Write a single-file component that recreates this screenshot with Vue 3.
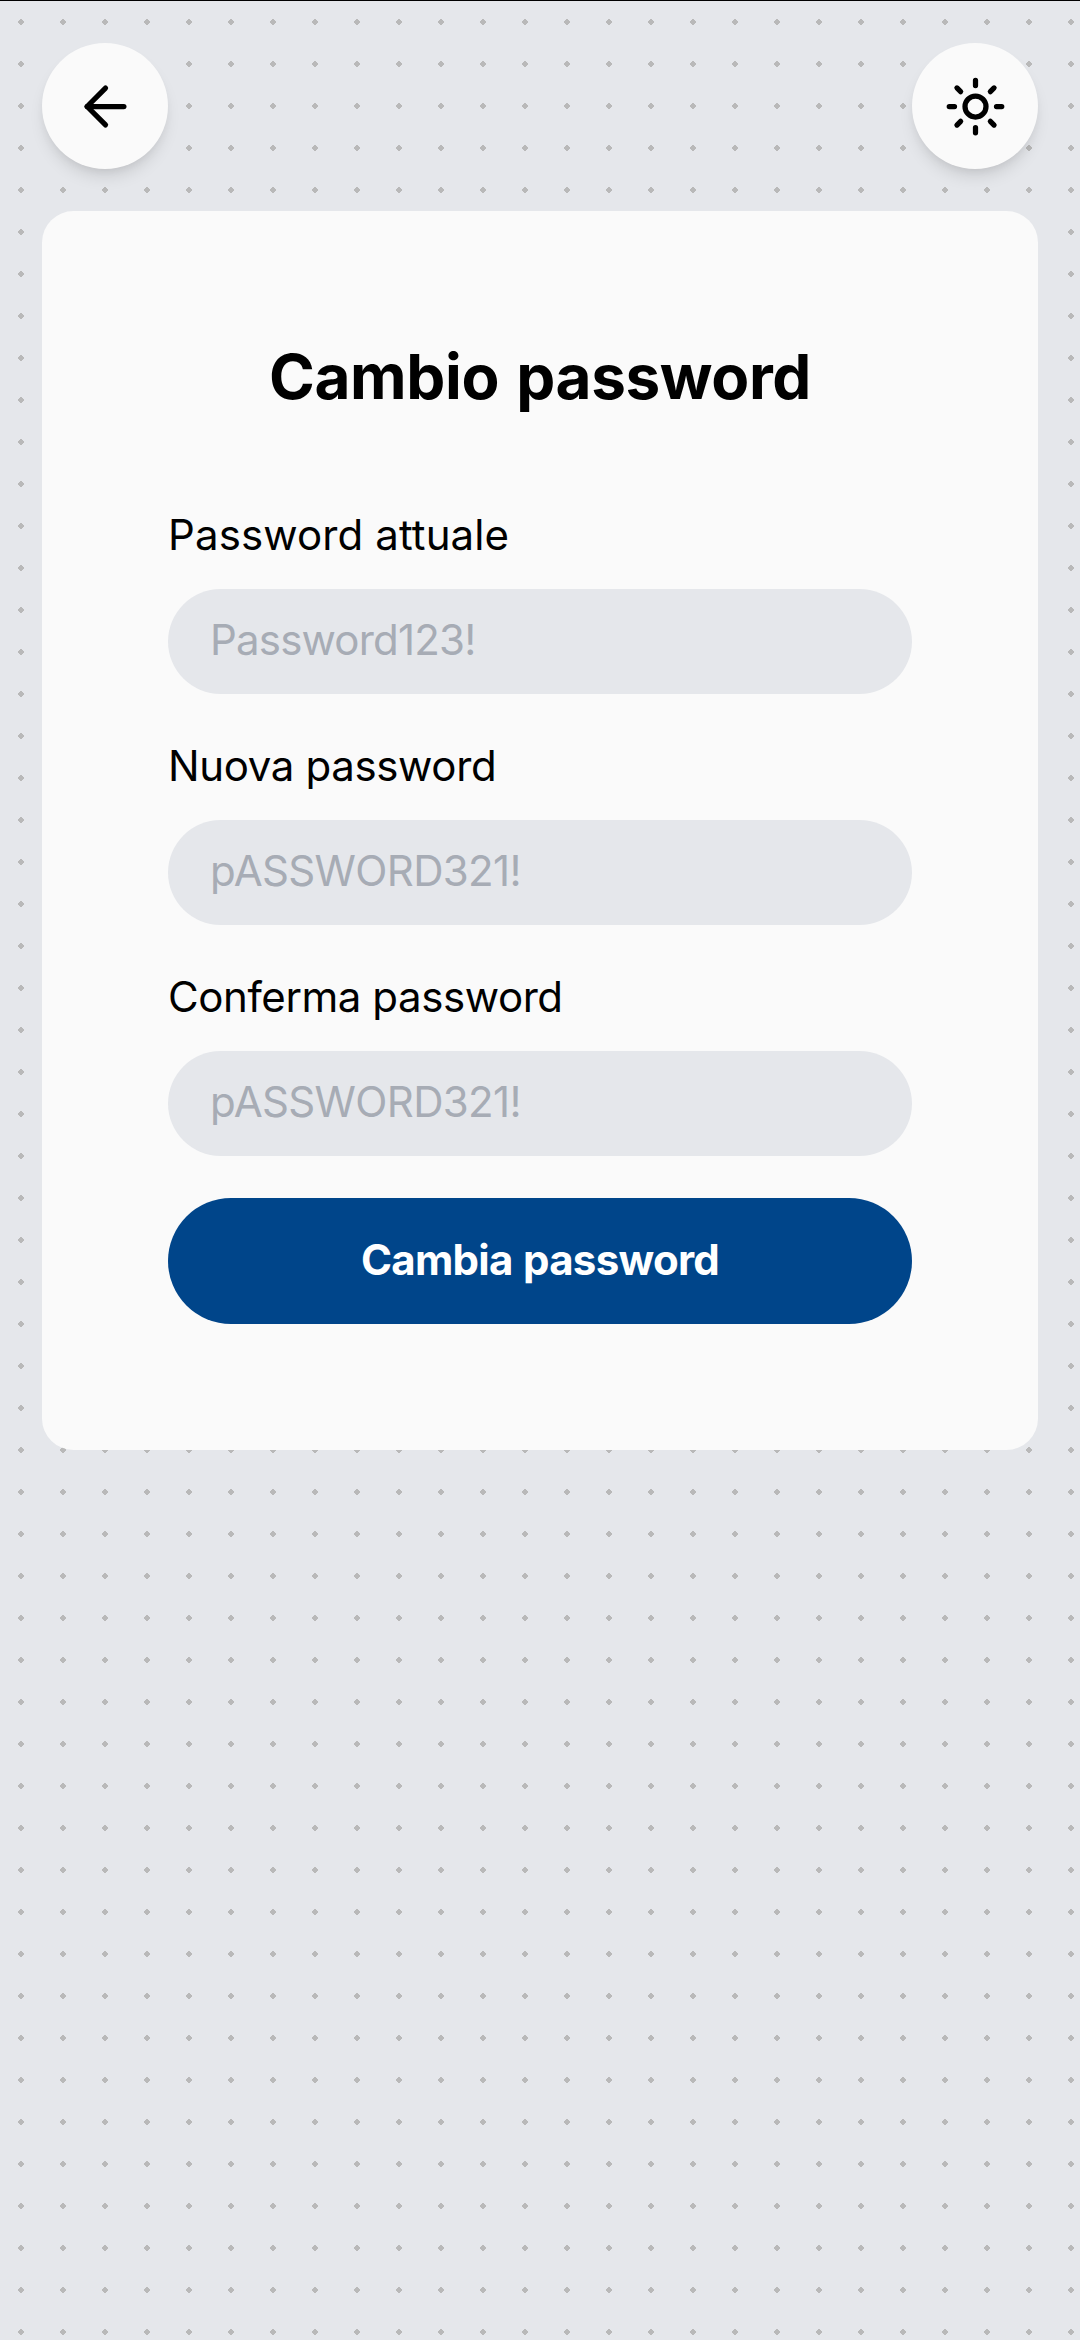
<script setup>
const fields = [
  { id: 'current', label: 'Password attuale', placeholder: 'Password123!' },
  { id: 'next', label: 'Nuova password', placeholder: 'pASSWORD321!' },
  { id: 'confirm', label: 'Conferma password', placeholder: 'pASSWORD321!' },
]
</script>

<template>
  <div class="page">
    <header class="toolbar">
      <button class="round" type="button" aria-label="Indietro">
        <svg viewBox="0 0 24 24"><path d="m12 19-7-7 7-7" /><path d="M19 12H5" /></svg>
      </button>
      <button class="round" type="button" aria-label="Tema">
        <svg viewBox="0 0 24 24">
          <circle cx="12" cy="12" r="4" />
          <path d="M12 2v2M12 20v2m-7.07-17.07 1.41 1.41m11.32 11.32 1.41 1.41M2 12h2m16 0h2M6.34 17.66l-1.41 1.41M19.07 4.93l-1.41 1.41" />
        </svg>
      </button>
    </header>
    <form class="card" @submit.prevent>
      <h1>Cambio password</h1>
      <div class="fields">
        <div v-for="f in fields" :key="f.id" class="field" :class="f.id">
          <label :for="f.id">{{ f.label }}</label>
          <input :id="f.id" type="text" :placeholder="f.placeholder" />
        </div>
      </div>
      <button class="submit" type="submit">Cambia password</button>
    </form>
  </div>
</template>

<style>
body {
  background: #e5e7eb;
}
</style>

<style scoped>
.page {
  box-sizing: border-box;
  min-height: 2340px;
  border-top: 1px solid #000;
  padding: 42px;
  background: #e5e7eb radial-gradient(circle, #b9b9b9 2.8px, transparent 2.9px) 0 0 / 42px 42px;
  font-family: Inter, "Liberation Sans", sans-serif;
  font-size: 42px;
  line-height: 63px;
  color: #000;
}
.toolbar {
  display: flex;
  justify-content: space-between;
  margin-bottom: 42px;
}
button {
  border: 0;
  font: inherit;
}
.round {
  display: flex;
  align-items: center;
  justify-content: center;
  width: 126px;
  height: 126px;
  padding: 1px 0 0 1px;
  border-radius: 50%;
  background: #fafafa;
  color: #000;
  box-shadow: 0 10.5px 15.75px -2.625px rgb(0 0 0 / 0.1), 0 5.25px 10.5px -5.25px rgb(0 0 0 / 0.1);
}
.round svg {
  width: 63px;
  height: 63px;
  fill: none;
  stroke: currentColor;
  stroke-width: 2;
  stroke-linecap: round;
  stroke-linejoin: round;
}
.card {
  padding: 126px;
  border-radius: 31.5px;
  background: #fafafa;
}
h1 {
  margin: 0 0 84px;
  padding-bottom: 4px;
  font-size: 62px;
  line-height: 80px;
  font-weight: 750;
  letter-spacing: -0.4px;
  word-spacing: 3px;
  text-align: center;
  white-space: nowrap;
}
.fields {
  display: grid;
  gap: 42px;
  margin-bottom: 42px;
}
.field {
  display: grid;
  gap: 21px;
}
label {
  line-height: 60px;
  padding-bottom: 3px;
  white-space: nowrap;
}
.current label {
  letter-spacing: 0.12px;
}
.next label {
  letter-spacing: -0.36px;
}
.confirm label {
  letter-spacing: -0.42px;
}
input {
  box-sizing: border-box;
  width: 100%;
  height: 105px;
  border: 0;
  border-radius: 53px;
  padding: 0 42px 5px;
  background: #e5e7eb;
  font: inherit;
  letter-spacing: -0.65px;
}
.current input {
  letter-spacing: -0.8px;
}
input::placeholder {
  color: #a7acb5;
  opacity: 1;
}
.submit {
  display: block;
  width: 100%;
  height: 126px;
  padding: 0 0 3px;
  border-radius: 63px;
  background: #00458a;
  color: #fff;
  font-weight: 700;
  letter-spacing: -0.7px;
  word-spacing: 1px;
}
</style>
